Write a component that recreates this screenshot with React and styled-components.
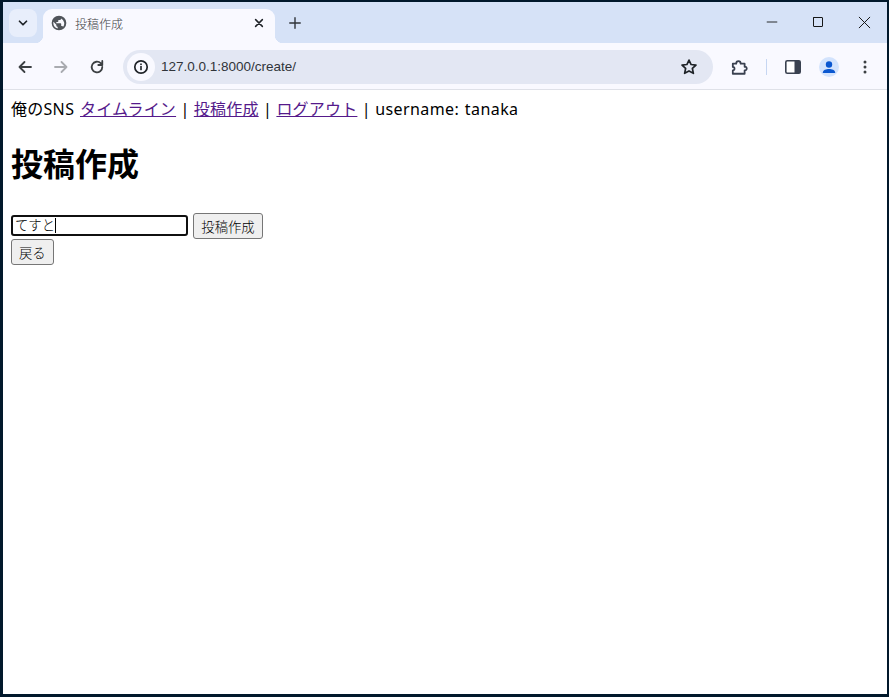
import React from "react";
import styled, { createGlobalStyle } from "styled-components";

const GlobalStyle = createGlobalStyle`
    html, body {
        margin: 0;
        padding: 0;
        height: 100%;
        background: #fff;
    }
    #root {
        height: 100%;
    }
`;

const Frame = styled.div`
    box-sizing: border-box;
    width: 889px;
    height: 697px;
    border: solid #01182b;
    border-width: 2px 2px 3px 3px;
    display: flex;
    flex-direction: column;
    overflow: hidden;
    font-family: "Noto Sans", "Noto Sans CJK JP", sans-serif;
`;

const TabStrip = styled.div`
    height: 41px;
    flex: none;
    background: #d6e2f7;
    display: flex;
    align-items: flex-start;
    padding: 7px 0 0 6px;
    box-sizing: border-box;
`;

const TabMenu = styled.div`
    width: 28px;
    height: 28px;
    border-radius: 8px;
    background: #e8eefb;
    display: flex;
    align-items: center;
    justify-content: center;
    margin-right: 6px;
`;

const Tab = styled.div`
    position: relative;
    width: 232px;
    height: 34px;
    box-sizing: border-box;
    background: #f9f9ff;
    border-radius: 9px 9px 0 0;
    display: flex;
    align-items: center;
    padding: 0 10px 6px 8px;
    &::before, &::after {
        content: "";
        position: absolute;
        bottom: 0;
        width: 8px;
        height: 8px;
    }
    &::before {
        left: -8px;
        background: radial-gradient(circle at 0 0, transparent 8px, #f9f9ff 8.5px);
    }
    &::after {
        right: -8px;
        background: radial-gradient(circle at 100% 0, transparent 8px, #f9f9ff 8.5px);
    }
`;

const TabTitle = styled.span`
    flex: 1;
    margin-left: 8px;
    font-size: 12px;
    color: #3c4043;
    font-family: "Noto Sans CJK JP", sans-serif;
    font-weight: 300;
`;

const NewTab = styled.div`
    width: 28px;
    height: 28px;
    margin-left: 6px;
    display: flex;
    align-items: center;
    justify-content: center;
`;

const WindowControls = styled.div`
    margin-left: auto;
    display: flex;
    height: 28px;
    align-items: center;
    margin-top: -1px;
`;

const WindowButton = styled.div`
    width: 46px;
    display: flex;
    justify-content: center;
`;

const Toolbar = styled.div`
    height: 47px;
    flex: none;
    box-sizing: border-box;
    background: #f9f9ff;
    border-bottom: 1px solid #dfe1e8;
    display: flex;
    align-items: center;
    padding: 1px 0 0 4px;
`;

const NavButton = styled.div`
    width: 36px;
    height: 36px;
    display: flex;
    align-items: center;
    justify-content: center;
`;

const Omnibox = styled.div`
    width: 590px;
    height: 34px;
    margin-left: 8px;
    border-radius: 17px;
    background: #e3e7f3;
    display: flex;
    align-items: center;
    padding: 0 15px 0 4px;
    box-sizing: border-box;
`;

const SiteInfo = styled.div`
    width: 28px;
    height: 28px;
    border-radius: 50%;
    background: #f9f9ff;
    display: flex;
    align-items: center;
    justify-content: center;
`;

const Url = styled.span`
    flex: 1;
    margin-left: 6px;
    font-size: 13.5px;
    color: #30343a;
    font-family: "Liberation Sans", sans-serif;
`;

const ToolbarIcons = styled.div`
    display: flex;
    align-items: center;
    margin-left: 8px;
`;

const Separator = styled.div`
    width: 1px;
    height: 16px;
    background: #c6d6f2;
    margin: 0 8px 0 9px;
`;

const Avatar = styled.div`
    width: 20px;
    height: 20px;
    border-radius: 50%;
    background: #d3e3fd;
    overflow: hidden;
`;

const Page = styled.main`
    flex: 1;
    background: #fff;
    padding: 7px 8px 8px;
    color: #000;
`;

const NavBar = styled.div`
    font-size: 16px;
    line-height: 24px;
    height: 24px;
    white-space: pre;
    letter-spacing: 0.2px;
    a {
        color: #551a8b;
    }
`;

// 欧文だけ少し字間を広げる
const Latin = styled.span`
    letter-spacing: 0.42px;
    word-spacing: 1px;
`;

const Title = styled.h1`
    font-size: 32px;
    font-weight: 700;
    line-height: 47px;
    margin: 18px 0 27px;
    font-family: "Noto Sans CJK JP", sans-serif;
`;

const FormRow = styled.form`
    display: flex;
    align-items: flex-start;
    gap: 5px;
    margin: 0;
`;

const TextInput = styled.div`
    box-sizing: border-box;
    width: 177px;
    height: 21px;
    margin-top: 2px;
    border: 2px solid #101010;
    border-radius: 3px;
    font-size: 13.33px;
    line-height: 17px;
    padding-left: 2px;
    display: flex;
    align-items: center;
    font-weight: 300;
`;

const Caret = styled.span`
    width: 1px;
    height: 15px;
    background: #000;
`;

const Button = styled.button`
    box-sizing: border-box;
    height: 26px;
    padding: 0 7px;
    border: 1px solid #767676;
    border-radius: 3px;
    background: #efefef;
    color: #000;
    font-size: 13.33px;
    font-weight: 300;
    font-family: "Noto Sans CJK JP", sans-serif;
    display: block;
`;

const SubmitButton = styled(Button)`
    width: 70px;
`;

const Icon = ({ size = 16, children, fill = "none", stroke = "#3c4043", width = 1.8 }) => (
    <svg width={size} height={size} viewBox="0 0 16 16" fill={fill} stroke={stroke} strokeWidth={width} strokeLinecap="round" strokeLinejoin="round">
        {children}
    </svg>
);

export default function App() {
    return (
        <>
            <GlobalStyle />
            <Frame>
                <TabStrip>
                    <TabMenu>
                        <Icon size={14} stroke="#1f2328" width={2}><path d="M4 6l4 4 4-4" /></Icon>
                    </TabMenu>
                    <Tab>
                        <svg width="16" height="16" viewBox="0 0 24 24">
                            <path fill="#50545a" d="M12 1a11 11 0 1 0 0 22 11 11 0 0 0 0-22zM3.5 12c0-.7.1-1.3.2-1.9L8 14.5v1.2c0 1.1.9 2 2 2v2.6A8.5 8.5 0 0 1 3.5 12zm14.700 5.800c-.3-.8-1-1.300-1.900-1.300h-1v-3c0-.6-.4-1-1-1H8v-2h2c.6 0 1-.4 1-1v-2h2c1.100 0 2-.9 2-2v-.4a8.500 8.500 0 0 1 3.200 12.700z" />
                        </svg>
                        <TabTitle>投稿作成</TabTitle>
                        <Icon size={12} stroke="#1f2328" width={2}><path d="M3.500 3.500l9 9M12.500 3.500l-9 9" /></Icon>
                    </Tab>
                    <NewTab>
                        <Icon size={14} stroke="#30343a" width={1.6}><path d="M8 2v12M2 8h12" /></Icon>
                    </NewTab>
                    <WindowControls>
                        <WindowButton><Icon size={14} stroke="#111" width={1}><path d="M2 8h12" strokeLinecap="butt" /></Icon></WindowButton>
                        <WindowButton><Icon size={12} stroke="#111" width={1.3}><rect x="2" y="2" width="12" height="12" rx="0.5" /></Icon></WindowButton>
                        <WindowButton><Icon size={13} stroke="#111" width={1.2}><path d="M1.500 1.500l13 13M14.500 1.500l-13 13" /></Icon></WindowButton>
                    </WindowControls>
                </TabStrip>
                <Toolbar>
                    <NavButton><Icon size={16}><path d="M14 8H2.500M7.500 3L2.500 8l5 5" /></Icon></NavButton>
                    <NavButton><Icon size={16} stroke="#a9abb0"><path d="M2 8h11.500M8.500 3l5 5-5 5" /></Icon></NavButton>
                    <NavButton><Icon size={16}><path d="M13.300 8a5.300 5.300 0 1 1-1.600-3.800L13.300 6M13.300 2v4h-4" /></Icon></NavButton>
                    <Omnibox>
                        <SiteInfo>
                            <svg width="16" height="16" viewBox="0 0 16 16">
                                <circle cx="8" cy="8" r="6.200" fill="none" stroke="#1f2328" strokeWidth="1.700" />
                                <rect x="7.200" y="7" width="1.600" height="4.200" fill="#1f2328" />
                                <rect x="7.200" y="4.500" width="1.600" height="1.600" fill="#1f2328" />
                            </svg>
                        </SiteInfo>
                        <Url>127.0.0.1:8000/create/</Url>
                        <Icon size={18} stroke="#1f2328" width={1.500}><path d="M8 1.800l1.900 4 4.300.5-3.200 3 .9 4.300L8 11.500l-3.900 2.100.9-4.300-3.200-3 4.300-.5z" /></Icon>
                    </Omnibox>
                    <ToolbarIcons>
                        <NavButton>
                            <Icon size={18} stroke="#3a4150" width={1.600}><path d="M2.500 5h3c0-3 4-3 4 0h3.500v2.800c2.500-.3 2.500 3.400 0 3.200V14H2.500v-3c2 .2 2-3.200 0-3z" /></Icon>
                        </NavButton>
                        <Separator />
                        <NavButton>
                            <svg width="16" height="14" viewBox="0 0 16 14">
                                <rect x="0.800" y="0.800" width="14.400" height="12.400" rx="1.500" fill="#fff" stroke="#3a4150" strokeWidth="1.600" />
                                <rect x="9.500" y="0.800" width="5.700" height="12.400" fill="#3a4150" />
                            </svg>
                        </NavButton>
                        <NavButton>
                            <Avatar>
                                <svg width="20" height="20" viewBox="0 0 20 20">
                                    <circle cx="10" cy="7.500" r="3.200" fill="#0b57d0" />
                                    <path d="M3.800 15.500c0-2.500 3.500-3.500 6.200-3.500s6.200 1 6.200 3.500v.5H3.800z" fill="#0b57d0" />
                                </svg>
                            </Avatar>
                        </NavButton>
                        <NavButton>
                            <svg width="4" height="14" viewBox="0 0 4 14">
                                <circle cx="2" cy="2" r="1.500" fill="#3c4043" />
                                <circle cx="2" cy="7" r="1.500" fill="#3c4043" />
                                <circle cx="2" cy="12" r="1.500" fill="#3c4043" />
                            </svg>
                        </NavButton>
                    </ToolbarIcons>
                </Toolbar>
                <Page>
                    <NavBar>
                        俺の<Latin>SNS </Latin><a href="#timeline">タイムライン</a> | <a href="#create">投稿作成</a> | <a href="#logout">ログアウト</a> | <Latin>username: tanaka</Latin>
                    </NavBar>
                    <Title>投稿作成</Title>
                    <FormRow>
                        <TextInput>てすと<Caret /></TextInput>
                        <SubmitButton type="button">投稿作成</SubmitButton>
                    </FormRow>
                    <Button type="button">戻る</Button>
                </Page>
            </Frame>
        </>
    );
}
